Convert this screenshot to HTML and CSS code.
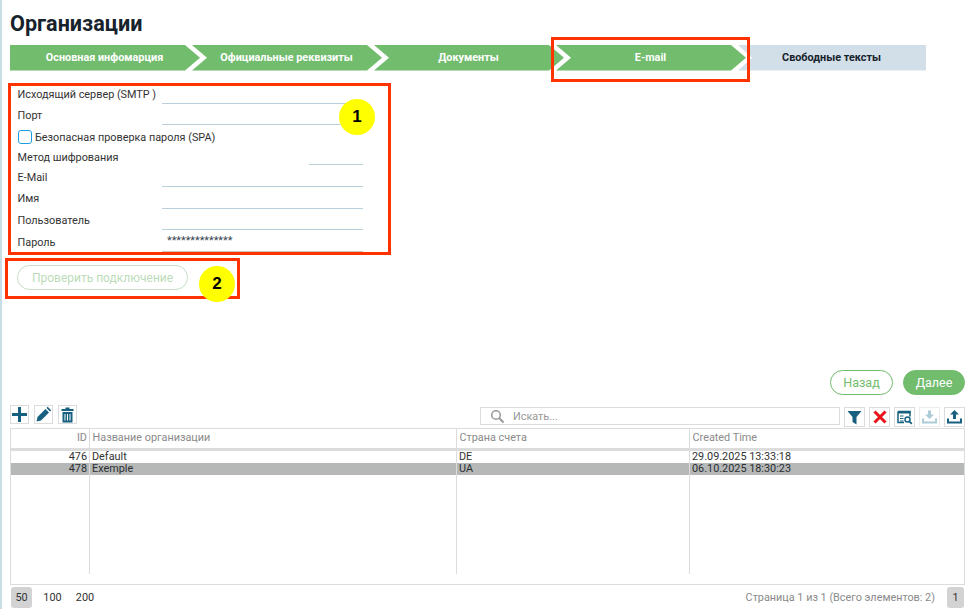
FILE: index.html
```html
<!DOCTYPE html>
<html lang="ru">
<head>
<meta charset="utf-8">
<title>Организации</title>
<link rel="stylesheet" href="styles.css">
</head>
<body>
<div class="page">
  <h1 class="title">Организации</h1>
  <div class="steps">
    <div class="step step-first">Основная инфомарция</div>
    <div class="step">Официальные реквизиты</div>
    <div class="step">Документы</div>
    <div class="step">E-mail</div>
    <div class="step step-last">Свободные тексты</div>
  </div>
  <form class="form">
    <div class="row r1"><label class="lbl">Исходящий сервер (SMTP )</label><span class="field"></span></div>
    <div class="row r2"><label class="lbl">Порт</label><span class="field"></span></div>
    <div class="row r3"><span class="check"></span><label class="lbl-check">Безопасная проверка пароля (SPA)</label></div>
    <div class="row r4"><label class="lbl">Метод шифрования</label><span class="field field-short"></span></div>
    <div class="row r5"><label class="lbl">E-Mail</label><span class="field"></span></div>
    <div class="row r6"><label class="lbl">Имя</label><span class="field"></span></div>
    <div class="row r7"><label class="lbl">Пользователь</label><span class="field"></span></div>
    <div class="row r8"><label class="lbl">Пароль</label><span class="field field-pass">**************</span></div>
  </form>
  <button class="btn-test" type="button">Проверить подключение</button>
  <div class="nav">
    <button class="btn btn-back" type="button">Назад</button>
    <button class="btn btn-next" type="button">Далее</button>
  </div>
  <div class="toolbar">
    <div class="tools-left">
      <span class="tool"><svg width="17" height="17" viewBox="0 0 17 17"><path d="M7 1h3v6h6v3h-6v6H7v-6H1V7h6z" fill="#17607f"/></svg></span>
      <span class="tool"><svg width="17" height="17" viewBox="0 0 17 17"><path d="M1.500 15.500l1-4.500 8-8 3.500 3.500-8 8zM11.500 2l1.200-1.200 3.500 3.500L15 5.500z" fill="#17607f"/></svg></span>
      <span class="tool"><svg width="15" height="16" viewBox="0 0 15 16"><path d="M5.500 0.500h4v1.500h4v2h-12v-2h4zM2.500 5h10v10.500h-10z" fill="#17607f"/><path d="M5 7v6.500M7.500 7v6.500M10 7v6.500" stroke="#fff" stroke-width="1"/></svg></span>
    </div>
    <div class="tools-right">
      <div class="search">
        <svg width="15" height="15" viewBox="0 0 15 15"><circle cx="6" cy="6" r="4.300" fill="none" stroke="#9a9a9a" stroke-width="1.600"/><path d="M9.300 9.300l4.200 4.200" stroke="#9a9a9a" stroke-width="2"/></svg>
        <span class="search-text">Искать...</span>
      </div>
      <span class="tool-s"><svg width="15" height="15" viewBox="0 0 15 15"><path d="M0.500 1h14l-5 6v7.500l-4-2.500V7z" fill="#17607f"/></svg></span>
      <span class="tool-s"><svg width="14" height="14" viewBox="0 0 14 14"><path d="M1.500 1.500l11 11M12.500 1.500l-11 11" stroke="#e8141c" stroke-width="3"/></svg></span>
      <span class="tool-s"><svg width="16" height="15" viewBox="0 0 16 15"><path d="M1 1.500h12v5M1 1.500v11h6" fill="none" stroke="#17607f" stroke-width="1.500"/><path d="M1 1h12.500v2.500H1z" fill="#17607f"/><path d="M3 6h3.500M3 8.500h3.500M3 11h3.500" stroke="#17607f" stroke-width="1.200"/><circle cx="10.500" cy="9.500" r="2.500" fill="none" stroke="#17607f" stroke-width="1.500"/><path d="M12.300 11.300l2.500 2.500" stroke="#17607f" stroke-width="1.800"/></svg></span>
      <span class="tool-s tool-off"><svg width="15" height="14" viewBox="0 0 15 14"><path d="M6 0.500h3v4h3l-4.500 4.500-4.500-4.500h3z" fill="#aecbd8"/><path d="M1 8.500v4h13v-4" fill="none" stroke="#aecbd8" stroke-width="2"/></svg></span>
      <span class="tool-s"><svg width="15" height="14" viewBox="0 0 15 14"><path d="M6 9h3v-4.500h3l-4.500-4.500-4.500 4.500h3z" fill="#17607f"/><path d="M1 8.500v4h13v-4" fill="none" stroke="#17607f" stroke-width="2"/></svg></span>
    </div>
  </div>
  <div class="grid">
    <div class="grow ghead">
      <div class="cell num">ID</div><div class="cell">Название организации</div><div class="cell">Страна счета</div><div class="cell">Created Time</div>
    </div>
    <div class="grow gdata">
      <div class="cell num">476</div><div class="cell">Default</div><div class="cell">DE</div><div class="cell">29.09.2025 13:33:18</div>
    </div>
    <div class="grow gdata gsel">
      <div class="cell num">478</div><div class="cell">Exemple</div><div class="cell">UA</div><div class="cell">06.10.2025 18:30:23</div>
    </div>
    <div class="grow gfill">
      <div class="cell"></div><div class="cell"></div><div class="cell"></div><div class="cell"></div>
    </div>
  </div>
  <div class="pager">
    <div class="sizes"><span class="size size-on">50</span><span class="size">100</span><span class="size">200</span></div>
    <div class="pages"><span class="pinfo">Страница 1 из 1 (Всего элементов: 2)</span><span class="pnum">1</span></div>
  </div>
</div>
<div class="mark m1"></div>
<div class="mark m2"></div>
<div class="mark m3"></div>
<div class="badge b1">1</div>
<div class="badge b2">2</div>
</body>
</html>
```
FILE: styles.css
```css
* { box-sizing: border-box; }
html, body { margin: 0; padding: 0; }
body {
  width: 970px;
  height: 609px;
  overflow: hidden;
  background: #fff;
  font-family: Roboto, "Liberation Sans", sans-serif;
  font-size: 10.850px;
  color: #333;
  position: relative;
}
.page {
  height: 609px;
  border-left: 2px solid #c8dde6;
  padding: 0 5px 0 8px;
  display: flex;
  flex-direction: column;
}
.title {
  margin: 0;
  height: 45px;
  padding-top: 11px;
  font-size: 21.600px;
  line-height: 26px;
  font-weight: 700;
  color: #16222c;
}
.steps { display: flex; height: 26px; }
.step {
  width: 190px;
  margin-right: -8px;
  height: 25.500px;
  padding-right: 1px;
  background: #71bc6d;
  color: #fff;
  font-weight: 700;
  font-size: 10.850px;
  line-height: 25px;
  text-align: center;
  clip-path: polygon(0 0, 175px 0, 190px 50%, 175px 100%, 0 100%, 15px 50%);
}
.step-first { clip-path: polygon(0 0, 175px 0, 190px 50%, 175px 100%, 0 100%); }
.step-last {
  width: 188px;
  margin-right: 0;
  background: #d3dfe8;
  color: #16222c;
  clip-path: polygon(0 0, 100% 0, 100% 100%, 0 100%, 14px 50%);
}
.form { margin-top: 12px; height: 170px; padding-left: 7.500px; }
.row { display: flex; position: relative; color: #333; }
.lbl { width: 144.500px; flex: none; line-height: 14px; }
.lbl-check { margin-left: 3.500px; line-height: 14px; padding-top: 6px; }
.field {
  width: 201px;
  flex: none;
  border-bottom: 1px solid #b9d0dc;
}
.field-short { width: 54px; margin-left: 147px; }
.field-pass {
  padding-left: 5px;
  line-height: 15px;
  padding-top: 3px;
  border-bottom-color: #c8c8c8;
  color: #34414d;
}
.r1 { height: 21px; }
.r2 { height: 21px; }
.r3 { height: 20px; align-items: flex-start; }
.r4 { height: 20px; }
.r5 { height: 22px; }
.r6 { height: 22px; }
.r7 { height: 21px; }
.r8 { height: 22px; }
.r1 .lbl { padding-top: 5px; }
.r2 .lbl { padding-top: 5px; }
.r4 .lbl { padding-top: 6px; }
.r5 .lbl { padding-top: 6px; }
.r6 .lbl { padding-top: 5px; }
.r7 .lbl { padding-top: 5px; }
.r8 .lbl { padding-top: 6px; }
.check {
  width: 14px;
  height: 14px;
  margin-top: 5px;
  border: 1px solid #1c9ee0;
  border-radius: 3px;
  background: #fff;
  flex: none;
}
.btn-test {
  align-self: flex-start;
  margin: 12px 0 0 7px;
  width: 171px;
  height: 25px;
  padding: 0;
  background: #fff;
  border: 1px solid #c6dfc4;
  border-radius: 13px;
  color: #bcdcb9;
  font: 400 12px Roboto, sans-serif;
}
.nav { display: flex; justify-content: flex-end; gap: 10px; margin-top: 80px; }
.btn {
  width: 62px;
  height: 25px;
  padding: 0;
  border-radius: 13px;
  border: 1px solid #71bc6d;
  font: 400 12.500px Roboto, sans-serif;
}
.btn-back { width: 63px; background: #fff; color: #71bc6d; }
.btn-next { background: #71bc6d; color: #fff; }
.toolbar { display: flex; justify-content: space-between; margin-top: 10px; height: 23px; }
.tools-left { display: flex; gap: 5px; height: 19px; }
.tool {
  width: 19px;
  height: 19px;
  border: 1px solid #dcdcdc;
  display: flex;
  align-items: center;
  justify-content: center;
}
.tools-right { display: flex; gap: 4px; padding-top: 2px; align-items: flex-start; }
.search {
  width: 360px;
  height: 18px;
  border: 1px solid #dcdcdc;
  display: flex;
  align-items: center;
  padding-left: 9px;
  color: #999;
}
.search-text { margin-left: 8px; }
.tool-s {
  width: 21px;
  height: 20px;
  border: 1px solid #dcdcdc;
  display: flex;
  align-items: center;
  justify-content: center;
}
.tool-off { border-color: #ececec; }
.grid {
  width: 955px;
  height: 157px;
  border: 1px solid #dcdcdc;
  display: flex;
  flex-direction: column;
}
.grow { display: grid; grid-template-columns: 79px 367px 233px 1fr; }
.cell { padding-left: 2px; border-right: 1px solid #dcdcdc; white-space: nowrap; }
.cell:last-child { border-right: 0; }
.num { text-align: right; padding: 0 2px 0 0; }
.ghead { height: 22px; border-bottom: 3px solid #dcdcdc; color: #8a8a8a; line-height: 18px; }
.ghead .cell { padding-left: 2.500px; }
.ghead .num { padding: 0 2px 0 0; }
.gdata { height: 12px; line-height: 11px; color: #333; }
.gsel { background: #b5b8b7; color: #2a2f33; margin-top: 0; }
.gfill { height: 99px; }
.pager { display: flex; justify-content: space-between; margin-top: 2px; padding: 0 1px; }
.sizes { display: flex; align-items: center; }
.size { width: 21px; height: 21px; line-height: 21px; text-align: center; margin-right: 11.500px; color: #333; }
.size-on { background: #d3d3d3; border-radius: 3px; margin-right: 10px; }
.pages { display: flex; align-items: center; }
.pinfo { color: #8a8a8a; margin-right: 12px; }
.pnum { width: 17px; height: 21px; line-height: 21px; text-align: center; background: #d3d3d3; border-radius: 3px; }
.mark { position: absolute; border: 3px solid #ff3300; }
.m1 { left: 8px; top: 83px; width: 383px; height: 172px; }
.m2 { left: 5px; top: 258px; width: 235px; height: 41px; }
.m3 { left: 551px; top: 37px; width: 199px; height: 45px; }
.badge {
  position: absolute;
  width: 36px;
  height: 36px;
  border-radius: 50%;
  background: #ffff00;
  color: #000;
  font: 700 17px/36px "Liberation Sans", sans-serif;
  text-align: center;
}
.b1 { left: 339px; top: 99px; }
.b2 { left: 199px; top: 266px; }
```
